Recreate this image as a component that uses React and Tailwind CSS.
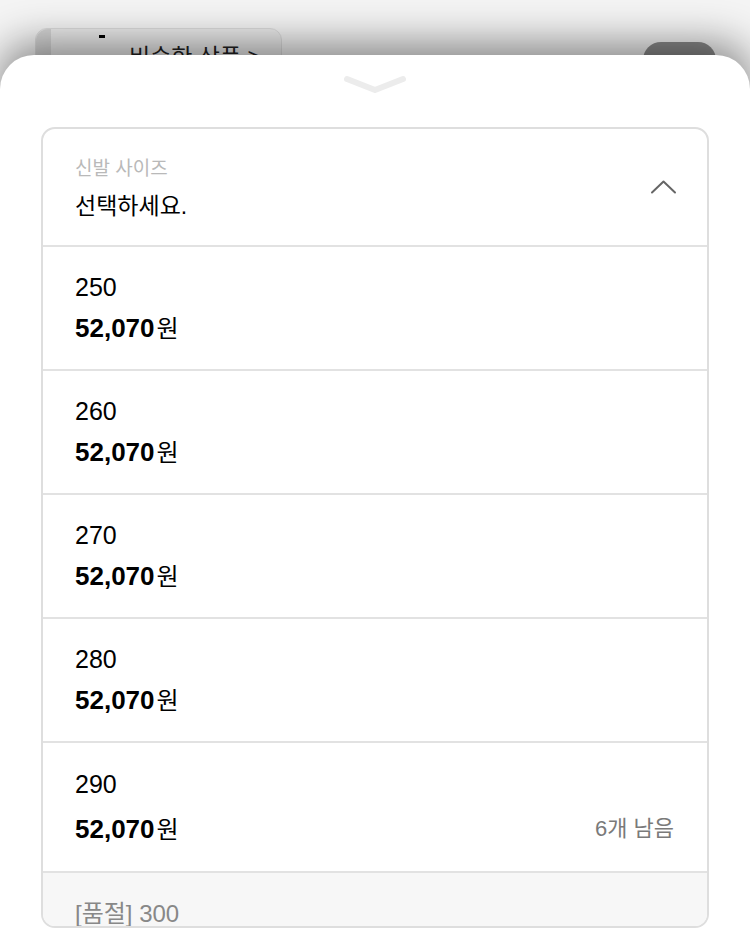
import React from "react";

const FONT = { fontFamily: '"Liberation Sans", "Noto Sans CJK KR", sans-serif' };

function Row({ size, extra, tall }) {
  return (
    <div
      className={`flex flex-col justify-center px-[32px] border-b-2 border-[#e2e2e2] shrink-0 ${
        tall ? "h-[130px]" : "h-[124px]"
      }`}
    >
      <div className="text-[25px] leading-[30px] text-black">{size}</div>
      <div
        className={`flex items-center justify-between ${tall ? "mt-[14px]" : "mt-[10px]"}`}
      >
        <div className="flex items-baseline leading-[32px]">
          <span className="text-[26px] font-bold text-black">52,070</span>
          <span className="text-[24px] text-black ml-[2px]">원</span>
        </div>
        {extra && (
          <span className="text-[22px] leading-[32px] text-[#7a7a7a] mr-[1px]">{extra}</span>
        )}
      </div>
    </div>
  );
}

export default function App() {
  return (
    <div
      className="w-[750px] h-[943px] bg-[#f4f4f4] overflow-hidden flex flex-col"
      style={FONT}
    >
      {/* background page behind sheet */}
      <div className="h-[55px] relative shrink-0 flex items-start justify-between">
        <div className="ml-[35px] mt-[28px] w-[247px] h-[60px] rounded-[12px] bg-[#ececec] border border-[#dddddd] flex">
          <div className="w-[15px] h-full bg-[#d6d6d6] rounded-l-[12px]" />
          <div className="relative flex-1">
            <div className="absolute left-[48px] top-[6px] w-[6px] h-[3px] bg-black" />
            <div className="absolute left-[78px] top-[13px] text-[23px] leading-[30px] text-[#222]">
              비슷한 상품 &gt;
            </div>
          </div>
        </div>
        <div className="mr-[34px] mt-[42px] w-[73px] h-[36px] rounded-full bg-[#8a8a8a]" />
      </div>

      {/* bottom sheet */}
      <div className="relative z-10 flex-1 bg-white rounded-t-[34px] shadow-[0_-12px_40px_rgba(0,0,0,0.45)] flex flex-col items-center">
        <div className="pt-[20px] h-[72px] flex justify-center">
          <svg width="64" height="20" viewBox="0 0 64 20">
            <path
              d="M4 4 L32 15 L60 4"
              fill="none"
              stroke="#ececec"
              strokeWidth="6"
              strokeLinecap="round"
              strokeLinejoin="round"
            />
          </svg>
        </div>

        <div className="w-[668px] h-[801px] border-2 border-[#dedede] rounded-[14px] overflow-hidden flex flex-col">
          <div className="h-[118px] shrink-0 flex items-center justify-between pl-[32px] pr-[30px] border-b-2 border-[#e2e2e2]">
            <div className="flex flex-col pt-[4px]">
              <div className="text-[19px] leading-[24px] text-[#b9b9b9]">신발 사이즈</div>
              <div className="text-[23px] leading-[30px] mt-[10px] text-black">선택하세요.</div>
            </div>
            <svg width="27" height="16" viewBox="0 0 27 16">
              <path
                d="M2 13.5 L13.5 2.5 L25 13.5"
                fill="none"
                stroke="#666"
                strokeWidth="2"
                strokeLinecap="round"
                strokeLinejoin="round"
              />
            </svg>
          </div>
          <Row size="250" />
          <Row size="260" />
          <Row size="270" />
          <Row size="280" />
          <Row size="290" extra="6개 남음" tall />
          <div className="flex-1 bg-[#f7f7f7] px-[32px] pt-[26px]">
            <div className="text-[24px] leading-[30px] text-[#888888]">[품절] 300</div>
          </div>
        </div>
      </div>
    </div>
  );
}
